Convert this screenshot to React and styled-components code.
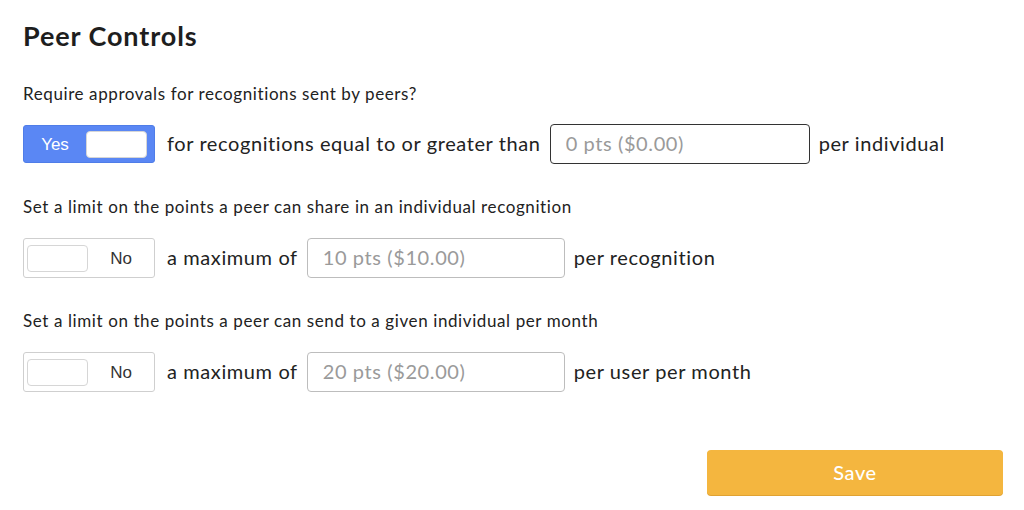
import * as React from 'react';
import styled, {createGlobalStyle} from "styled-components";

const GlobalStyle = createGlobalStyle`
  body {
    margin: 0;
    background: #fff;
    font-family: "Lato", "Noto Sans", sans-serif;
    color: #222;
  }
`

const Page = styled.div`
  width: 1024px;
  height: 510px;
  box-sizing: border-box;
  padding: 20px 21px 0 23px;
`

const Title = styled.h1`
  margin: 0;
  font-size: 27px;
  line-height: 32px;
  font-weight: 700;
  letter-spacing: 0.9px;
  color: #1e1e1e;
`

const Label = styled.div`
  margin-top: ${props => props.top}px;
  font-size: 17px;
  line-height: 20px;
  letter-spacing: 0.6px;
  color: #222;
`

const Row = styled.div`
  display: flex;
  align-items: center;
  gap: 9px;
  height: 40px;
  margin-top: ${props => props.top || 20}px;
  font-size: 20px;
  letter-spacing: 0.6px;
  color: #222;
`

const RowText = styled.span`
  padding-bottom: 2px;
`

const Toggle = styled.div`
  display: flex;
  align-items: center;
  flex-direction: ${props => props.on ? 'row' : 'row-reverse'};
  box-sizing: border-box;
  width: 132px;
  height: ${props => props.on ? 38 : 40}px;
  margin-right: 3px;
  padding: ${props => props.on ? '0 7px 0 0' : '0 0 0 3px'};
  border-radius: 3px;
  border: 1px solid ${props => props.on ? '#4f7de8' : '#cfcfcf'};
  background: ${props => props.on ? '#5a87f4' : '#fff'};
  cursor: pointer;
`

const ToggleText = styled.span`
  flex: 1;
  text-align: center;
  padding-top: 2px;
  font-family: "Liberation Sans", Arial, sans-serif;
  font-size: 17px;
  letter-spacing: 0;
  color: ${props => props.on ? '#fff' : '#333'};
`

const Knob = styled.span`
  width: 61px;
  height: 27px;
  box-sizing: border-box;
  border-radius: 4px;
  background: #fff;
  border: 1px solid #d6d6d6;
`

const Field = styled.input`
  box-sizing: border-box;
  width: ${props => props.w}px;
  height: 40px;
  padding: 0 15px 2px;
  border-radius: 4px;
  border: 1px solid ${props => props.dark ? '#333' : '#bdbdbd'};
  font-family: "Lato", "Noto Sans", sans-serif;
  font-size: 20px;
  letter-spacing: 0.6px;
  color: #222;
  outline: none;
  &::placeholder {
    color: #9a9a9a;
  }
`

const Footer = styled.div`
  display: flex;
  justify-content: flex-end;
  margin-top: 58px;
`

const SaveButton = styled.button`
  width: 296px;
  height: 45px;
  padding-bottom: 3px;
  border: none;
  border-radius: 4px;
  background: #f4b63f;
  box-shadow: 0 1px 0 #e0a232;
  color: #fff;
  font-family: "Lato", "Noto Sans", sans-serif;
  font-size: 20px;
  letter-spacing: 0.6px;
  font-weight: 500;
  cursor: pointer;
`

function Switch({on}) {
    return (
        <Toggle on={on}>
            <ToggleText on={on}>{on ? 'Yes' : 'No'}</ToggleText>
            <Knob/>
        </Toggle>
    )
}

export default function App() {
    return (
        <Page>
            <GlobalStyle/>
            <Title>Peer Controls</Title>

            <Label top={32}>Require approvals for recognitions sent by peers?</Label>
            <Row>
                <Switch on/>
                <RowText>for recognitions equal to or greater than</RowText>
                <Field w={260} dark placeholder="0 pts ($0.00)"/>
                <RowText>per individual</RowText>
            </Row>

            <Label top={33}>Set a limit on the points a peer can share in an individual recognition</Label>
            <Row top={21}>
                <Switch/>
                <RowText>a maximum of</RowText>
                <Field w={258} placeholder="10 pts ($10.00)"/>
                <RowText>per recognition</RowText>
            </Row>

            <Label top={33}>Set a limit on the points a peer can send to a given individual per month</Label>
            <Row top={21}>
                <Switch/>
                <RowText>a maximum of</RowText>
                <Field w={258} placeholder="20 pts ($20.00)"/>
                <RowText>per user per month</RowText>
            </Row>

            <Footer>
                <SaveButton>Save</SaveButton>
            </Footer>
        </Page>
    );
}
